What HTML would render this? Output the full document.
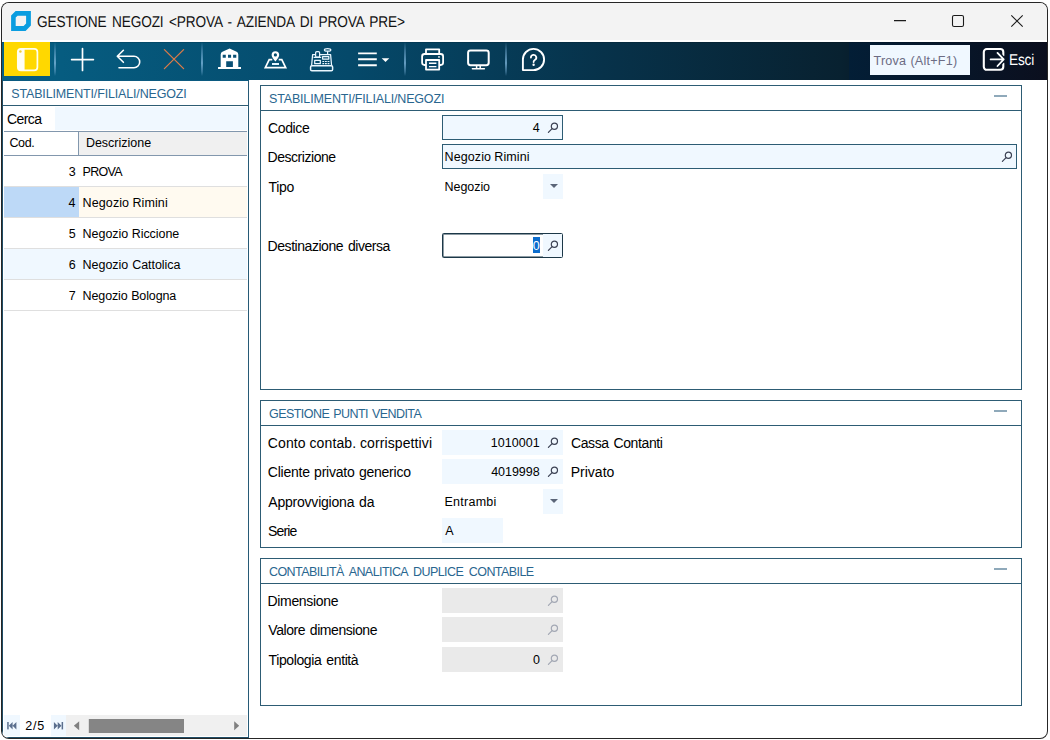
<!DOCTYPE html>
<html lang="it">
<head>
<meta charset="utf-8">
<title>GESTIONE NEGOZI</title>
<style>
html,body{margin:0;padding:0;}
body{width:1050px;height:740px;background:#fff;position:relative;overflow:hidden;font-family:"Liberation Sans",Arial,sans-serif;}
.win{position:absolute;left:2px;top:3px;width:1045px;height:735px;border-radius:7px;overflow:hidden;background:#fff;box-shadow:0 0 0 1px #262626;}
.c{position:absolute;left:-2px;top:-3px;width:1050px;height:740px;}
.c div,.c span,.c svg{position:absolute;}
.t{white-space:pre;line-height:1;color:#000;}
.titlebar{left:2px;top:3px;width:1045px;height:37px;background:#f3f3f3;}
.toolbar{left:2px;top:42px;width:847px;height:38px;background:linear-gradient(90deg,#066085 0%,#065c80 7%,#05496a 41%,#07324a 71%,#082130 99%,#081f2e 100%);}
.toolbar2{left:849px;top:42px;width:198px;height:38px;background:linear-gradient(90deg,#031e36 0%,#0b0f1e 100%);}
.tbtop{left:2px;top:42px;width:1045px;height:1px;background:rgba(0,0,0,.12);}
.ybtn{left:4px;top:42px;width:46px;height:34px;background:#ffd800;}
.sep{top:42px;width:2px;height:34px;background:linear-gradient(180deg,rgba(120,175,215,0) 0%,rgba(120,175,215,.4) 25%,rgba(135,190,228,.72) 62%,rgba(120,175,215,.35) 88%,rgba(120,175,215,0) 100%);}
.find{left:870px;top:45px;width:100px;height:30px;background:#f0f8ff;}
.lp{left:2px;top:80px;width:247px;height:658px;box-sizing:border-box;border-left:1px solid #1f4d66;border-right:1px solid #275a76;border-top:1px solid #0b5a80;border-bottom:1px solid #1f4d66;background:#fff;}
.hline{height:1px;background:#2d5c74;}
.gline{height:1px;background:#8297ad;}
.rline{height:1px;background:#dfdfdf;left:4px;width:243px;}
.panel{box-sizing:border-box;border:1px solid #2d5c74;background:#fff;}
.minus{width:13px;height:2px;background:#8fa9ba;left:994px;}
.fld{box-sizing:border-box;background:#f0f8ff;}
.fld.b{border:1px solid #2d5c74;}
.fld.dis{background:#eaeaea;}
.dd{background:#f0f8ff;width:20px;height:25px;left:543px;}
.tri{width:0;height:0;border-left:4px solid transparent;border-right:4px solid transparent;border-top:4px solid #5b6578;}
</style>
</head>
<body>
<div class="win"><div class="c">

<!-- title bar -->
<div class="titlebar"></div>
<svg style="left:10px;top:10px" width="22" height="22" viewBox="0 0 22 22"><path d="M5.6 1.1H20.9V15.6L15.6 20.9H1.1V5.6Z M7.6 5.7L5.7 7.6V16.1H13.6L16.1 13.6V5.7Z" fill="#0a9de0" fill-rule="evenodd"/></svg>
<span class="t" style="left:36.95px;top:15.00px;font-size:15.7px;letter-spacing:-0.144px;word-spacing:2.029px;transform:scale(0.87,1.0);transform-origin:0 0;color:#111;text-rendering:geometricPrecision;">GESTIONE NEGOZI &lt;PROVA - AZIENDA DI PROVA PRE&gt;</span>
<svg style="left:890px;top:10px" width="140" height="22" viewBox="0 0 140 22" fill="none" stroke="#1a1a1a" stroke-width="1.1"><path d="M4 10.6H16"/><rect x="62.5" y="5.5" width="11" height="11" rx="1.6"/><path d="M121.3 5.3L132.7 16.7M132.7 5.3L121.3 16.7"/></svg>

<!-- toolbar -->
<div class="toolbar"></div><div class="toolbar2"></div><div class="tbtop"></div>
<div class="ybtn"></div>
<svg id="ic_panel" style="left:14px;top:45px" width="28" height="28" viewBox="0 0 28 28"><rect x="3.8" y="3.8" width="19.6" height="21.6" rx="3.2" fill="none" stroke="#fffef0" stroke-width="1.7"/><path d="M7 3.8H10.6V25.4H7A3.2 3.2 0 0 1 3.8 22.2V7A3.2 3.2 0 0 1 7 3.8Z" fill="#fffef4"/><circle cx="6.4" cy="6.6" r="1.25" fill="#f2cf3a"/></svg>
<div class="sep" style="left:54px"></div>
<div class="sep" style="left:201px"></div>
<div class="sep" style="left:404px"></div>
<div class="sep" style="left:505px"></div>

<svg id="ic_plus" style="left:68px;top:45px" width="30" height="30" viewBox="0 0 30 30" fill="none" stroke="#fff" stroke-width="1.7" stroke-linecap="round"><path d="M14.5 3.7V25.5M3.6 14.6H25.4"/></svg>
<svg id="ic_undo" style="left:112px;top:45px" width="32" height="30" viewBox="0 0 32 30" fill="none" stroke="#fff" stroke-width="1.6" stroke-linecap="round" stroke-linejoin="round"><path d="M11.4 5.3L5.3 11.3L11.4 17.3M5.6 11.3H22A5.7 5.7 0 0 1 22 22.7H7"/></svg>
<svg id="ic_x" style="left:160px;top:45px" width="30" height="30" viewBox="0 0 30 30" fill="none" stroke="#d97a48" stroke-width="1.3" stroke-linecap="round"><path d="M4.4 4.6L23.6 23.6M23.6 4.6L4.4 23.6"/></svg>

<svg id="ic_store" style="left:214px;top:45px" width="30" height="30" viewBox="0 0 30 30"><path d="M6.7 21.9V9.4Q6.7 7.5 8.4 6.8L15.6 3.6L22.6 6.8Q24.3 7.5 24.3 9.4V21.9H27V23.9H4.05V21.9Z" fill="#fff"/><path d="M8.7 9.7h3.1v3.1H8.7zM14 9.7h3.1v3.1H14zM19.1 9.7h3.2v3.1h-3.2zM12.2 16.2h6.7v5.7h-6.7z" fill="#0a5075"/></svg>
<svg id="ic_map" style="left:260px;top:45px" width="32" height="30" viewBox="0 0 32 30" fill="none" stroke="#fff" stroke-width="1.7" stroke-linejoin="miter"><path d="M12.3 14.65H9.2L5.3 22.65H25.7L21.8 14.65H18.7"/><path d="M15.4 16.6C13.4 13.9 11.6 12 11.6 9.95A3.8 3.8 0 0 1 19.2 9.95C19.2 12 17.4 13.9 15.4 16.6ZM15.4 8.35A1.6 1.6 0 1 0 15.4 11.55A1.6 1.6 0 1 0 15.4 8.35Z" fill="#fff" fill-rule="evenodd" stroke="none"/><path d="M12 18.9H19" stroke="#e4f6ff" stroke-width="2"/></svg>
<svg id="ic_cash" style="left:306px;top:45px" width="30" height="30" viewBox="0 0 30 30" fill="none" stroke="#eaf7ff" stroke-width="1.25" stroke-linejoin="round"><rect x="4.6" y="20.8" width="22" height="4.9" rx="1.3" stroke-width="1.5"/><path d="M5.6 20.6L6.6 9.6H24.6L25.6 20.6"/><rect x="9.6" y="6.6" width="4" height="5.6" rx="1.2" fill="#0a4a6e"/><path d="M7.6 12.4H15.2"/><ellipse cx="21.6" cy="4.9" rx="3.2" ry="1.3"/><path d="M21.6 6.3V9.4"/><rect x="8.7" y="15.3" width="5.6" height="3.4"/><rect x="16.6" y="11.6" width="6.2" height="2.4"/><path d="M16.4 16.5H18.2M19 16.5H20.8M21.6 16.5H23.4M16.4 18.6H18.2M19 18.6H20.8M21.6 18.6H23.4" stroke-width="1.2"/></svg>
<svg id="ic_menu" style="left:354px;top:45px" width="40" height="30" viewBox="0 0 40 30"><path d="M4.1 8.4H22.8M4.1 14.3H22.8M4.1 20.3H22.8" stroke="#fff" stroke-width="1.9" fill="none"/><path d="M27.7 13.2H35.3L31.5 17Z" fill="#fff"/></svg>

<svg id="ic_print" style="left:417px;top:45px" width="30" height="30" viewBox="0 0 30 30" fill="none" stroke="#fff" stroke-width="1.8" stroke-linejoin="round"><path d="M9 9V4.3H22.2V9"/><rect x="5.1" y="9" width="21" height="11" rx="2.4"/><rect x="9" y="15" width="13.2" height="9.6" fill="#0a4668"/><path d="M12 18.2H19.4M12 21.6H19.4" stroke-width="1.4"/><circle cx="22" cy="11.9" r="0.9" fill="#fff" stroke="none"/></svg>
<svg id="ic_mon" style="left:463px;top:45px" width="30" height="30" viewBox="0 0 30 30" fill="none" stroke="#fff" stroke-width="1.8" stroke-linejoin="round"><rect x="5.1" y="5.4" width="20.6" height="14.8" rx="2.4" stroke-width="2"/><path d="M13.6 20.6V23.4M17.2 20.6V23.4" stroke-width="1.5"/><path d="M9.4 23.8H21.4" stroke-width="1.5" stroke-linecap="round"/></svg>
<svg id="ic_help" style="left:519px;top:45px" width="30" height="30" viewBox="0 0 30 30" fill="none" stroke="#fff" stroke-width="1.9" stroke-linejoin="round"><path d="M14.5 3.9A10.6 10.6 0 1 1 14.5 25.1H3.9V14.5A10.6 10.6 0 0 1 14.5 3.9Z"/><path d="M11.9 12.6A2.7 2.7 0 1 1 15.8 15C14.9 15.5 14.6 16 14.6 17" stroke-width="1.8" stroke-linecap="round"/><circle cx="14.6" cy="19.8" r="1.2" fill="#fff" stroke="none"/></svg>

<div class="find"></div>
<span class="t" style="left:873.45px;top:55.00px;font-size:12.6px;letter-spacing:0.223px;word-spacing:0.405px;color:#6c6c84;">Trova (Alt+F1)</span>
<svg id="ic_exit" style="left:980px;top:45px" width="28" height="28" viewBox="0 0 28 28" fill="none" stroke="#fff" stroke-linecap="round" stroke-linejoin="round"><path d="M23.3 10.6V7A3 3 0 0 0 20.3 4H6.8A3 3 0 0 0 3.8 7V21.800000000000001A3 3 0 0 0 6.8 24.8H20.3A3 3 0 0 0 23.3 21.8V18.4" stroke-width="2.1"/><path d="M14 14.4H23.4M17.5 7.9L23.7 14.4L17.5 21" stroke="#0a1628" stroke-width="4.6"/><path d="M10.6 14.4H23.4M17.5 7.9L23.7 14.4L17.5 21" stroke-width="1.8"/></svg>
<span class="t" style="left:1008.91px;top:53.00px;font-size:15.7px;letter-spacing:-0.239px;transform:scale(0.87,1.0);transform-origin:0 0;color:#fff;text-rendering:geometricPrecision;">Esci</span>

<!-- left panel -->
<div class="lp"></div>
<span class="t" style="left:11.30px;top:88.00px;font-size:12.5px;letter-spacing:-0.162px;color:#29668f;">STABILIMENTI/FILIALI/NEGOZI</span>
<div class="hline" style="left:3px;top:105px;width:245px"></div>
<span class="t" style="left:6.90px;top:112.00px;font-size:14.0px;letter-spacing:-0.575px;">Cerca</span>
<div class="fld" style="left:55px;top:107px;width:192px;height:23px"></div>
<div class="gline" style="left:4px;top:131px;width:243px"></div>
<div style="left:79px;top:132px;width:168px;height:23px;background:#f0f0f0"></div>
<div style="left:78px;top:132px;width:1px;height:23px;background:#8297ad"></div>
<div class="gline" style="left:4px;top:155px;width:243px"></div>
<span class="t" style="left:9.40px;top:137.00px;font-size:12.5px;letter-spacing:-0.367px;">Cod.</span><span class="t" style="left:85.90px;top:137.00px;font-size:12.5px;letter-spacing:-0.005px;">Descrizione</span>
<div style="left:4px;top:187px;width:75px;height:30px;background:#bdd9f7"></div>
<div style="left:79px;top:187px;width:168px;height:30px;background:#fffaf0"></div>
<div style="left:4px;top:249px;width:243px;height:30px;background:#f0f8ff"></div>
<div class="rline" style="top:186px"></div>
<div class="rline" style="top:217px"></div>
<div class="rline" style="top:248px"></div>
<div class="rline" style="top:279px"></div>
<div class="rline" style="top:310px"></div>
<span class="t" style="left:68.80px;top:166.00px;font-size:12.5px;">3</span><span class="t" style="left:82.60px;top:166.00px;font-size:12.5px;letter-spacing:-0.712px;">PROVA</span>
<span class="t" style="left:68.55px;top:197.00px;font-size:12.5px;">4</span><span class="t" style="left:82.60px;top:197.00px;font-size:12.5px;letter-spacing:0.100px;word-spacing:-0.250px;">Negozio Rimini</span>
<span class="t" style="left:68.80px;top:228.00px;font-size:12.5px;">5</span><span class="t" style="left:82.60px;top:228.00px;font-size:12.5px;letter-spacing:-0.038px;word-spacing:0.027px;">Negozio Riccione</span>
<span class="t" style="left:68.80px;top:259.00px;font-size:12.5px;">6</span><span class="t" style="left:82.60px;top:259.00px;font-size:12.5px;letter-spacing:-0.039px;word-spacing:0.529px;">Negozio Cattolica</span>
<span class="t" style="left:68.80px;top:290.00px;font-size:12.5px;">7</span><span class="t" style="left:82.60px;top:290.00px;font-size:12.5px;letter-spacing:-0.125px;word-spacing:0.200px;">Negozio Bologna</span>
<!-- nav / scrollbar -->
<div style="left:4px;top:715px;width:16px;height:21px;background:#f0f8ff"></div>
<div style="left:51px;top:715px;width:15px;height:21px;background:#f0f8ff"></div>
<div style="left:66px;top:715px;width:181px;height:21px;background:#f0f0f0"></div>
<svg style="left:4px;top:716px" width="64" height="20" viewBox="0 0 64 20" fill="#5b6f8e"><rect x="3.2" y="6" width="1.5" height="7.4"/><path d="M8.6 6V13.4L4.8 9.7ZM12.4 6V13.4L8.6 9.7Z"/><rect x="57.6" y="6" width="1.5" height="7.4"/><path d="M49.9 6V13.4L53.7 9.7ZM53.7 6V13.4L57.5 9.7Z"/></svg>
<span class="t" style="left:25.20px;top:720.00px;font-size:12.6px;letter-spacing:0.800px;">2/5</span>
<svg style="left:66px;top:715px" width="181" height="22" viewBox="0 0 181 22"><path d="M13.2 6.2V15.2L7.8 10.7Z" fill="#808080"/><path d="M168.2 6.2V15.2L173.2 10.7Z" fill="#808080"/><rect x="22.8" y="4" width="95.2" height="14" fill="#858585"/></svg>

<!-- panel 1 -->
<div class="panel" style="left:260px;top:85px;width:762px;height:305px"></div>
<div class="hline" style="left:261px;top:110px;width:760px"></div>
<div class="minus" style="top:95px"></div>
<span class="t" style="left:269.00px;top:93.00px;font-size:12.5px;letter-spacing:-0.165px;color:#29668f;">STABILIMENTI/FILIALI/NEGOZI</span>
<span class="t" style="left:268.00px;top:121.00px;font-size:14.0px;letter-spacing:-0.380px;">Codice</span><span class="t" style="left:267.50px;top:150.00px;font-size:14.0px;letter-spacing:-0.455px;">Descrizione</span><span class="t" style="left:268.45px;top:180.00px;font-size:14.0px;letter-spacing:-0.300px;">Tipo</span><span class="t" style="left:267.60px;top:239.00px;font-size:14.0px;letter-spacing:-0.450px;word-spacing:1.350px;">Destinazione diversa</span>
<div class="fld b" style="left:442px;top:115px;width:121px;height:25px"></div>
<div class="fld b" style="left:442px;top:144px;width:575px;height:25px"></div>
<div class="dd" style="top:174px"></div><div class="tri" style="left:550px;top:184px"></div>
<div class="fld" style="left:442px;top:233px;width:121px;height:25px;background:#fff;border:1px solid #1c3848;border-radius:1.5px;box-shadow:inset 0 0 0 .5px #1c3848"></div>
<div style="left:543px;top:234px;width:19px;height:23px;background:#f0f8ff"></div>
<div style="left:533px;top:237px;width:7px;height:16px;background:#0c6dcd"></div>
<span class="t" style="left:532.65px;top:122.00px;font-size:12.5px;">4</span><span class="t" style="left:444.50px;top:151.00px;font-size:12.5px;letter-spacing:0.100px;word-spacing:-0.350px;">Negozio Rimini</span><span class="t" style="left:444.50px;top:181.00px;font-size:12.5px;letter-spacing:-0.050px;">Negozio</span><span class="t" style="left:532.70px;top:240.00px;font-size:12.5px;color:#fff;">0</span>
<svg class="mg" style="left:546px;top:121.3px" width="14" height="14" viewBox="0 0 14 14" fill="none" stroke="#3c4254" stroke-width="1.2" stroke-linecap="round"><circle cx="8.4" cy="5.2" r="3.1"/><path d="M6.1 7.6L2.4 11.3"/></svg>
<svg class="mg" style="left:1000px;top:150.3px" width="14" height="14" viewBox="0 0 14 14" fill="none" stroke="#3c4254" stroke-width="1.2" stroke-linecap="round"><circle cx="8.4" cy="5.2" r="3.1"/><path d="M6.1 7.6L2.4 11.3"/></svg>
<svg class="mg" style="left:546px;top:239.3px" width="14" height="14" viewBox="0 0 14 14" fill="none" stroke="#3c4254" stroke-width="1.2" stroke-linecap="round"><circle cx="8.4" cy="5.2" r="3.1"/><path d="M6.1 7.6L2.4 11.3"/></svg>

<!-- panel 2 -->
<div class="panel" style="left:260px;top:400px;width:762px;height:148px"></div>
<div class="hline" style="left:261px;top:425px;width:760px"></div>
<div class="minus" style="top:410px"></div>
<span class="t" style="left:269.00px;top:408.00px;font-size:12.5px;letter-spacing:-0.553px;word-spacing:1.081px;color:#29668f;">GESTIONE PUNTI VENDITA</span>
<span class="t" style="left:267.80px;top:436.00px;font-size:14.0px;letter-spacing:0.109px;word-spacing:-0.218px;">Conto contab. corrispettivi</span><span class="t" style="left:267.80px;top:465.00px;font-size:14.0px;letter-spacing:-0.232px;word-spacing:0.713px;">Cliente privato generico</span><span class="t" style="left:268.30px;top:495.00px;font-size:14.0px;letter-spacing:-0.215px;word-spacing:1.181px;">Approvvigiona da</span><span class="t" style="left:268.00px;top:524.00px;font-size:14.0px;letter-spacing:-0.838px;">Serie</span>
<div class="fld" style="left:442px;top:430px;width:121px;height:25px"></div>
<div class="fld" style="left:442px;top:459px;width:121px;height:25px"></div>
<div class="dd" style="top:489px"></div><div class="tri" style="left:550px;top:499px"></div>
<div class="fld" style="left:442px;top:518px;width:61px;height:25px"></div>
<span class="t" style="left:490.65px;top:437.00px;font-size:12.5px;letter-spacing:0.050px;">1010001</span><span class="t" style="left:491.15px;top:466.00px;font-size:12.5px;letter-spacing:-0.033px;">4019998</span><span class="t" style="left:444.50px;top:496.00px;font-size:12.5px;letter-spacing:0.264px;">Entrambi</span><span class="t" style="left:445.30px;top:525.00px;font-size:12.5px;">A</span><span class="t" style="left:571.00px;top:436.00px;font-size:14.0px;letter-spacing:-0.391px;word-spacing:1.282px;">Cassa Contanti</span><span class="t" style="left:570.70px;top:465.00px;font-size:14.0px;letter-spacing:0.017px;">Privato</span>
<svg class="mg" style="left:546px;top:436.3px" width="14" height="14" viewBox="0 0 14 14" fill="none" stroke="#3c4254" stroke-width="1.2" stroke-linecap="round"><circle cx="8.4" cy="5.2" r="3.1"/><path d="M6.1 7.6L2.4 11.3"/></svg>
<svg class="mg" style="left:546px;top:465.3px" width="14" height="14" viewBox="0 0 14 14" fill="none" stroke="#3c4254" stroke-width="1.2" stroke-linecap="round"><circle cx="8.4" cy="5.2" r="3.1"/><path d="M6.1 7.6L2.4 11.3"/></svg>

<!-- panel 3 -->
<div class="panel" style="left:260px;top:558px;width:762px;height:148px"></div>
<div class="hline" style="left:261px;top:583px;width:760px"></div>
<div class="minus" style="top:568px"></div>
<span class="t" style="left:269.00px;top:566.00px;font-size:12.5px;letter-spacing:-0.570px;word-spacing:2.674px;color:#29668f;">CONTABILITÀ ANALITICA DUPLICE CONTABILE</span>
<span class="t" style="left:267.50px;top:594.00px;font-size:14.0px;letter-spacing:-0.333px;">Dimensione</span><span class="t" style="left:268.30px;top:623.00px;font-size:14.0px;letter-spacing:-0.450px;word-spacing:1.400px;">Valore dimensione</span><span class="t" style="left:268.55px;top:653.00px;font-size:14.0px;letter-spacing:-0.392px;word-spacing:1.535px;">Tipologia entità</span>
<div class="fld dis" style="left:442px;top:588px;width:121px;height:25px"></div>
<div class="fld dis" style="left:442px;top:617px;width:121px;height:25px"></div>
<div class="fld dis" style="left:442px;top:647px;width:121px;height:25px"></div>
<span class="t" style="left:532.90px;top:654.00px;font-size:12.5px;">0</span>
<svg class="mg" style="left:546px;top:594.3px" width="14" height="14" viewBox="0 0 14 14" fill="none" stroke="#a3a8b4" stroke-width="1.2" stroke-linecap="round"><circle cx="8.4" cy="5.2" r="3.1"/><path d="M6.1 7.6L2.4 11.3"/></svg>
<svg class="mg" style="left:546px;top:623.3px" width="14" height="14" viewBox="0 0 14 14" fill="none" stroke="#a3a8b4" stroke-width="1.2" stroke-linecap="round"><circle cx="8.4" cy="5.2" r="3.1"/><path d="M6.1 7.6L2.4 11.3"/></svg>
<svg class="mg" style="left:546px;top:653.3px" width="14" height="14" viewBox="0 0 14 14" fill="none" stroke="#a3a8b4" stroke-width="1.2" stroke-linecap="round"><circle cx="8.4" cy="5.2" r="3.1"/><path d="M6.1 7.6L2.4 11.3"/></svg>

</div></div>
</body>
</html>
